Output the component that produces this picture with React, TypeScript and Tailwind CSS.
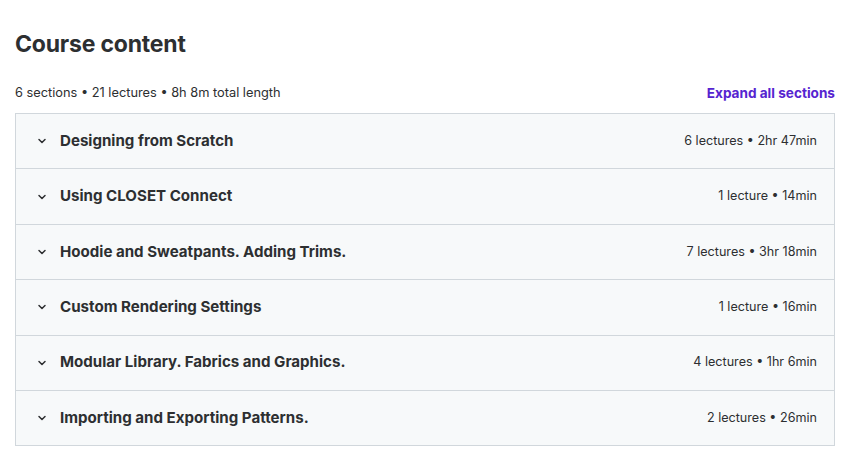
import React from 'react';

interface Section {
  title: string;
  meta: string;
}

const sections: Section[] = [
  { title: 'Designing from Scratch', meta: '6 lectures • 2hr 47min' },
  { title: 'Using CLOSET Connect', meta: '1 lecture • 14min' },
  { title: 'Hoodie and Sweatpants. Adding Trims.', meta: '7 lectures • 3hr 18min' },
  { title: 'Custom Rendering Settings', meta: '1 lecture • 16min' },
  { title: 'Modular Library. Fabrics and Graphics.', meta: '4 lectures • 1hr 6min' },
  { title: 'Importing and Exporting Patterns.', meta: '2 lectures • 26min' },
];

const Chevron = () => (
  <svg width="10" height="10" viewBox="0 0 10 10" className="text-[#2d2f31]">
    <path d="M2 3.5 L5 6.5 L8 3.5" fill="none" stroke="currentColor" strokeWidth="1.5" strokeLinecap="round" strokeLinejoin="round" />
  </svg>
);

export default function App() {
  return (
    <div className="w-[851px] h-[467px] bg-white px-[15px] pt-[28px] text-[#2d2f31]" style={{ fontFamily: 'Inter, "Noto Sans", sans-serif' }}>
      <h2 className="text-[23px] leading-[32px] font-bold tracking-[-0.2px]">Course content</h2>
      <div className="mt-[23px] flex items-center justify-between pr-[1px] h-[20px]">
        <span className="text-[12.8px] text-[#2d2f31]">6 sections • 21 lectures • 8h 8m total length</span>
        <button className="text-[13.6px] font-bold text-[#5624d0]">Expand all sections</button>
      </div>
      <div className="mt-[10px] w-[820px] border border-[#d1d7dc]">
        {sections.map((s, i) => (
          <div
            key={s.title}
            className={`flex items-center justify-between bg-[#f7f9fa] pl-[21px] pr-[17px] ${i < sections.length - 1 ? 'h-[55.4px] border-b border-[#d1d7dc]' : 'h-[54px]'}`}
          >
            <div className="flex items-center gap-[13px]">
              <Chevron />
              <span className="text-[15.1px] font-bold">{s.title}</span>
            </div>
            <span className="text-[12.6px]">{s.meta}</span>
          </div>
        ))}
      </div>
    </div>
  );
}
